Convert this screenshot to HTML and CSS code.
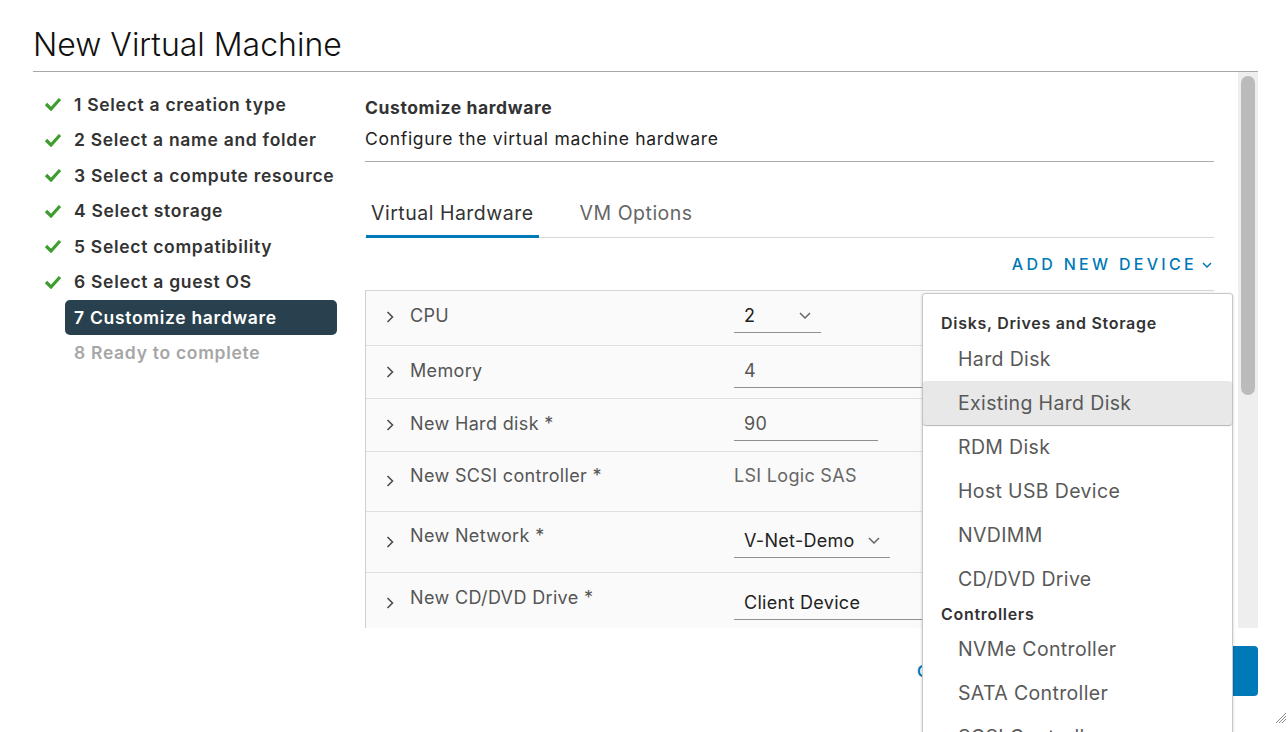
FILE: index.html
```html
<!DOCTYPE html>
<html lang="en">
<head>
<meta charset="utf-8">
<title>New Virtual Machine</title>
<link rel="stylesheet" href="styles.css">
</head>
<body>
<div class="dialog">
  <header class="dlg-head"><h1 class="dlg-title">New Virtual Machine</h1></header>
  <div class="dlg-body">
    <div class="scroll">
      <nav class="steps">
        <div class="step done"><span class="step-icon"><svg viewBox="0 0 18 14" width="18" height="14"><polyline points="2,7 7,12 16,2" fill="none" stroke="#3f9d2f" stroke-width="3.2"/></svg></span><span class="step-label">1 Select a creation type</span></div>
        <div class="step done"><span class="step-icon"><svg viewBox="0 0 18 14" width="18" height="14"><polyline points="2,7 7,12 16,2" fill="none" stroke="#3f9d2f" stroke-width="3.2"/></svg></span><span class="step-label">2 Select a name and folder</span></div>
        <div class="step done"><span class="step-icon"><svg viewBox="0 0 18 14" width="18" height="14"><polyline points="2,7 7,12 16,2" fill="none" stroke="#3f9d2f" stroke-width="3.2"/></svg></span><span class="step-label">3 Select a compute resource</span></div>
        <div class="step done"><span class="step-icon"><svg viewBox="0 0 18 14" width="18" height="14"><polyline points="2,7 7,12 16,2" fill="none" stroke="#3f9d2f" stroke-width="3.2"/></svg></span><span class="step-label">4 Select storage</span></div>
        <div class="step done"><span class="step-icon"><svg viewBox="0 0 18 14" width="18" height="14"><polyline points="2,7 7,12 16,2" fill="none" stroke="#3f9d2f" stroke-width="3.2"/></svg></span><span class="step-label">5 Select compatibility</span></div>
        <div class="step done"><span class="step-icon"><svg viewBox="0 0 18 14" width="18" height="14"><polyline points="2,7 7,12 16,2" fill="none" stroke="#3f9d2f" stroke-width="3.2"/></svg></span><span class="step-label">6 Select a guest OS</span></div>
        <div class="step active"><span class="step-icon"></span><span class="step-label">7 Customize hardware</span></div>
        <div class="step todo"><span class="step-icon"></span><span class="step-label">8 Ready to complete</span></div>
      </nav>
      <main class="content">
        <h2 class="page-title">Customize hardware</h2>
        <p class="page-sub">Configure the virtual machine hardware</p>
        <div class="tabs">
          <div class="tab active">Virtual Hardware</div>
          <div class="tab">VM Options</div>
        </div>
        <div class="toolbar">
          <span class="link-btn">ADD NEW DEVICE<svg class="link-caret" viewBox="0 0 10 6" width="10" height="6"><polyline points="1,1 5,5 9,1" fill="none" stroke="#0079b8" stroke-width="1.5"/></svg></span>
        </div>
        <div class="hw">
          <div class="hw-row r-cpu">
            <span class="hw-chev"><svg viewBox="0 0 8 12" width="8" height="12"><polyline points="1.5,1 6.5,6 1.5,11" fill="none" stroke="#4d4d4d" stroke-width="1.6"/></svg></span>
            <span class="hw-label">CPU</span>
            <span class="field select w-cpu"><span class="field-text dark">2</span><svg class="sel-caret" viewBox="0 0 12 7" width="12" height="7"><polyline points="1,1 6,6 11,1" fill="none" stroke="#666" stroke-width="1.5"/></svg></span>
          </div>
          <div class="hw-row r-std">
            <span class="hw-chev"><svg viewBox="0 0 8 12" width="8" height="12"><polyline points="1.5,1 6.5,6 1.5,11" fill="none" stroke="#4d4d4d" stroke-width="1.6"/></svg></span>
            <span class="hw-label">Memory</span>
            <span class="field w-mem"><span class="field-text">4</span></span>
          </div>
          <div class="hw-row r-std">
            <span class="hw-chev"><svg viewBox="0 0 8 12" width="8" height="12"><polyline points="1.5,1 6.5,6 1.5,11" fill="none" stroke="#4d4d4d" stroke-width="1.6"/></svg></span>
            <span class="hw-label">New Hard disk *</span>
            <span class="field w-hd"><span class="field-text">90</span></span>
          </div>
          <div class="hw-row r-scsi">
            <span class="hw-chev"><svg viewBox="0 0 8 12" width="8" height="12"><polyline points="1.5,1 6.5,6 1.5,11" fill="none" stroke="#4d4d4d" stroke-width="1.6"/></svg></span>
            <span class="hw-label">New SCSI controller *</span>
            <span class="plain-val">LSI Logic SAS</span>
          </div>
          <div class="hw-row r-net">
            <span class="hw-chev"><svg viewBox="0 0 8 12" width="8" height="12"><polyline points="1.5,1 6.5,6 1.5,11" fill="none" stroke="#4d4d4d" stroke-width="1.6"/></svg></span>
            <span class="hw-label">New Network *</span>
            <span class="field select w-net"><span class="field-text dark">V-Net-Demo</span><svg class="sel-caret" viewBox="0 0 12 7" width="12" height="7"><polyline points="1,1 6,6 11,1" fill="none" stroke="#666" stroke-width="1.5"/></svg></span>
          </div>
          <div class="hw-row r-cd">
            <span class="hw-chev"><svg viewBox="0 0 8 12" width="8" height="12"><polyline points="1.5,1 6.5,6 1.5,11" fill="none" stroke="#4d4d4d" stroke-width="1.6"/></svg></span>
            <span class="hw-label">New CD/DVD Drive *</span>
            <span class="field w-cd"><span class="field-text dark">Client Device</span></span>
          </div>
        </div>
      </main>
    </div>
    <div class="scrollbar"><div class="thumb"></div></div>
  </div>
  <footer class="dlg-foot">
    <button class="btn btn-flat">CANCEL</button>
    <button class="btn btn-outline">BACK</button>
    <button class="btn btn-primary">NEXT</button>
  </footer>

  <div class="menu">
    <div class="menu-head">Disks, Drives and Storage</div>
    <div class="menu-item">Hard Disk</div>
    <div class="menu-item hover">Existing Hard Disk</div>
    <div class="menu-item">RDM Disk</div>
    <div class="menu-item">Host USB Device</div>
    <div class="menu-item">NVDIMM</div>
    <div class="menu-item">CD/DVD Drive</div>
    <div class="menu-head sub">Controllers</div>
    <div class="menu-item">NVMe Controller</div>
    <div class="menu-item">SATA Controller</div>
    <div class="menu-item">SCSI Controller</div>
    <div class="menu-item">USB Controller</div>
  </div>

  <svg class="resize" viewBox="0 0 12 12" width="12" height="12"><g stroke="#8a8a8a" stroke-width="1"><line x1="1" y1="11" x2="11" y2="1"/><line x1="4" y1="11" x2="11" y2="4"/><line x1="7" y1="11" x2="11" y2="7"/></g></svg>
</div>
</body>
</html>
```
FILE: styles.css
```css
* { box-sizing: border-box; }
html, body { margin: 0; padding: 0; background: #fff; }
body {
  font-family: Inter, "Open Sans", "Liberation Sans", sans-serif;
  color: #333;
}
.dialog {
  position: relative;
  width: 1288px;
  height: 732px;
  overflow: hidden;
  padding: 0 30px 0 33px;
  background: #fff;
}
.dlg-head {
  height: 72px;
  border-bottom: 1px solid #a8a8a8;
  padding-top: 29px;
}
.dlg-title {
  margin: 0;
  font-size: 32px;
  line-height: 32px;
  font-weight: 300;
  color: #111;
}
.dlg-body {
  display: flex;
  height: 556px;
}
.scroll {
  flex: 1;
  display: flex;
  overflow: hidden;
  padding-right: 24px;
}
/* steps */
.steps {
  width: 332px;
  flex: none;
  padding-top: 14.5px;
}
.step {
  display: flex;
  align-items: center;
  height: 35.5px;
  padding-left: 11px;
}
.step-icon {
  width: 21px;
  height: 14px;
  display: flex;
  align-items: center;
}
.step-label {
  width: 272px;
  height: 35px;
  line-height: 35px;
  padding-left: 9px;
  border-radius: 5px;
  font-size: 17.5px;
  font-weight: 600;
  letter-spacing: 0.7px;
  color: #333;
  white-space: nowrap;
}
.step.active .step-label {
  background: #29414e;
  color: #fff;
}
.step.todo .step-label { color: #a6a6a6; }

/* content */
.content {
  width: 849px;
  flex: none;
}
.page-title {
  margin: 24px 0 0;
  font-size: 17.5px;
  line-height: 24px;
  font-weight: 700;
  letter-spacing: 0.6px;
  color: #333;
}
.page-sub {
  margin: 7px 0 0;
  font-size: 17.5px;
  line-height: 24px;
  letter-spacing: 0.7px;
  color: #222;
  padding-bottom: 10px;
  border-bottom: 1px solid #ababab;
}
.tabs {
  display: flex;
  gap: 36px;
  margin-top: 31px;
  border-bottom: 1px solid #d9d9d9;
  padding-left: 1px;
}
.tab {
  font-size: 19.5px;
  line-height: 40px;
  letter-spacing: 0.5px;
  padding: 0 5px 2px;
  border-bottom: 3px solid transparent;
  margin-bottom: -1px;
  color: #666;
}
.tab.active {
  color: #333;
  border-bottom-color: #0079b8;
}
.toolbar {
  height: 52px;
  display: flex;
  align-items: center;
  justify-content: flex-end;
  padding-right: 2px;
}
.link-btn {
  display: flex;
  align-items: center;
  gap: 5px;
  color: #0079b8;
  font-size: 16px;
  font-weight: 500;
  letter-spacing: 3.3px;
}
.link-caret { margin-top: 1px; }

/* hardware stack */
.hw {
  border-top: 1px solid #d6d6d6;
  border-left: 1px solid #cfcfcf;
  background: #fafafa;
}
.hw-row {
  display: grid;
  grid-template-columns: 24px 324px 1fr;
  align-items: start;
  padding-left: 20px;
  border-bottom: 1px solid #dedede;
}
.r-cpu { height: 55px; }
.r-std { height: 53px; }
.r-scsi { height: 60px; }
.r-net { height: 61px; }
.r-cd { height: 70px; }
.hw-chev {
  display: flex;
  margin-top: 20px;
}
.hw-label {
  font-size: 18px;
  line-height: 24px;
  letter-spacing: 0.35px;
  margin-top: 13px;
  color: #555;
  white-space: nowrap;
}
.r-scsi .hw-label, .r-net .hw-label { margin-top: 12px; }
.r-scsi .hw-chev { margin-top: 23px; }
.r-net .hw-chev { margin-top: 24px; }
.r-cd .hw-chev { margin-top: 24px; }
.field {
  display: flex;
  align-items: center;
  height: 34px;
  padding-left: 10px;
  border-bottom: 1px solid #8f8f8f;
  margin-top: 8px;
}
.r-net .field { margin-top: 12px; }
.r-cd .field { margin-top: 13px; }
.field-text {
  font-size: 18px;
  letter-spacing: 0.3px;
  color: #565656;
}
.field-text.dark { color: #222; }
.select { justify-content: space-between; padding-right: 10px; }
.w-cpu { width: 87px; }
.w-mem { width: 260px; }
.w-hd { width: 144px; }
.w-net { width: 156px; }
.w-cd { width: 260px; }
.plain-val {
  font-size: 18px;
  line-height: 24px;
  letter-spacing: 0.3px;
  margin-top: 12px;
  color: #666;
}

/* scrollbar */
.scrollbar {
  width: 20px;
  flex: none;
  background: #eeeeee;
  padding: 4px 3px 0;
}
.thumb {
  height: 319px;
  border-radius: 7px;
  background: #bbbbbb;
}

/* footer */
.dlg-foot {
  display: flex;
  justify-content: flex-end;
  gap: 12px;
  padding-top: 18px;
}
.btn {
  height: 50px;
  min-width: 100px;
  padding: 0 17px;
  font-family: inherit;
  font-size: 16px;
  font-weight: 600;
  letter-spacing: 3px;
  border-radius: 4px;
  border: 1px solid transparent;
  background: transparent;
  color: #0079b8;
}
.btn-flat { width: 118px; padding: 0; text-align: left; }
.btn-outline { border-color: #0079b8; }
.btn-primary { background: #0079b8; color: #fff; }

/* dropdown menu */
.menu {
  position: absolute;
  left: 922px;
  top: 293px;
  width: 311px;
  height: 470px;
  background: #fff;
  border: 1px solid #c8c8c8;
  border-radius: 3px;
  box-shadow: 0 1px 3px rgba(0,0,0,0.2);
  padding-top: 15px;
}
.menu-head {
  height: 28px;
  line-height: 28px;
  padding-left: 18px;
  font-size: 16px;
  font-weight: 600;
  letter-spacing: 0.7px;
  color: #333;
}
.menu-head.sub {
  height: 26px;
  line-height: 26px;
}
.menu-item {
  height: 44px;
  line-height: 44px;
  padding-left: 35px;
  font-size: 19.5px;
  letter-spacing: 0.35px;
  color: #595959;
}
.menu-item.hover {
  background: #e8e8e8;
  border-radius: 3px;
  box-shadow: 0 1px 1px rgba(0,0,0,0.3);
}
.resize {
  position: absolute;
  right: 1px;
  bottom: 8px;
}
```
